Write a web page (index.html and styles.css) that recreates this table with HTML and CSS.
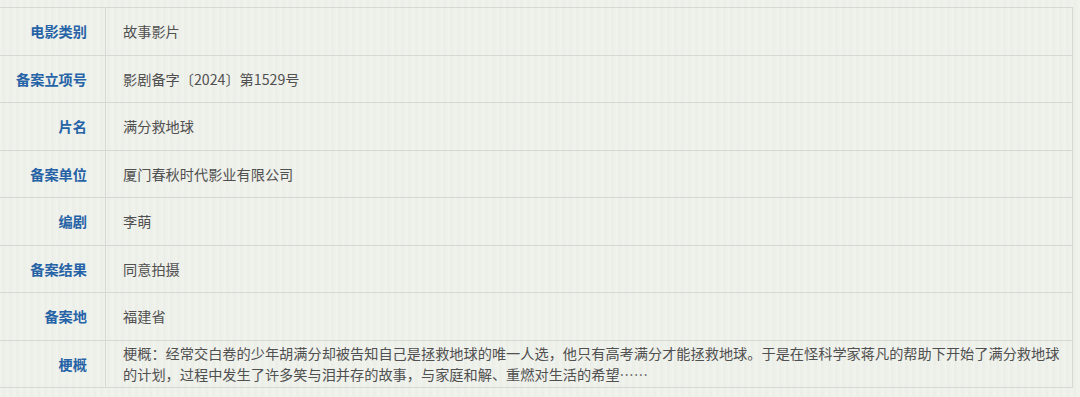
FILE: index.html
```html
<!DOCTYPE html>
<html lang="zh-CN">
<head>
<meta charset="utf-8">
<title>电影备案信息</title>
<link rel="stylesheet" href="styles.css">
</head>
<body>
<div class="page">
  <table class="info">
    <tbody>
      <tr><th>电影类别</th><td>故事影片</td></tr>
      <tr><th>备案立项号</th><td>影剧备字〔2024〕第1529号</td></tr>
      <tr><th>片名</th><td>满分救地球</td></tr>
      <tr><th>备案单位</th><td>厦门春秋时代影业有限公司</td></tr>
      <tr><th>编剧</th><td>李萌</td></tr>
      <tr><th>备案结果</th><td>同意拍摄</td></tr>
      <tr><th>备案地</th><td>福建省</td></tr>
      <tr class="long"><th>梗概</th><td>梗概：经常交白卷的少年胡满分却被告知自己是拯救地球的唯一人选，他只有高考满分才能拯救地球。于是在怪科学家蒋凡的帮助下开始了满分救地球的计划，过程中发生了许多笑与泪并存的故事，与家庭和解、重燃对生活的希望……</td></tr>
    </tbody>
  </table>
</div>
</body>
</html>
```

FILE: styles.css
```css
html, body {
  margin: 0;
  padding: 0;
}
body {
  background-color: #eef0ea;
  background-image: repeating-linear-gradient(90deg, rgba(255,255,255,0.12) 0 2px, rgba(0,0,0,0.006) 2px 5px, rgba(255,255,255,0.06) 5px 7px);
  font-family: "Noto Sans CJK SC", "Microsoft YaHei", sans-serif;
  width: 1080px;
  height: 397px;
  overflow: hidden;
}
.page {
  padding-top: 7px;
  margin-left: -1px;
}
.info {
  border-collapse: collapse;
  width: 1074px;
  font-size: 14.2px;
  table-layout: fixed;
}
.info th, .info td {
  border: 1px solid #d6d9d3;
  height: 47.5px;
  padding: 0;
  box-sizing: border-box;
  vertical-align: middle;
}
.info th {
  width: 106px;
  text-align: right;
  padding-right: 18px;
  color: #2663a6;
  font-weight: bold;
}
.info td {
  padding-left: 17px;
  padding-right: 6px;
  color: #505050;
  text-align: left;
}
.info tr.long td {
  line-height: 21px;
}
```
